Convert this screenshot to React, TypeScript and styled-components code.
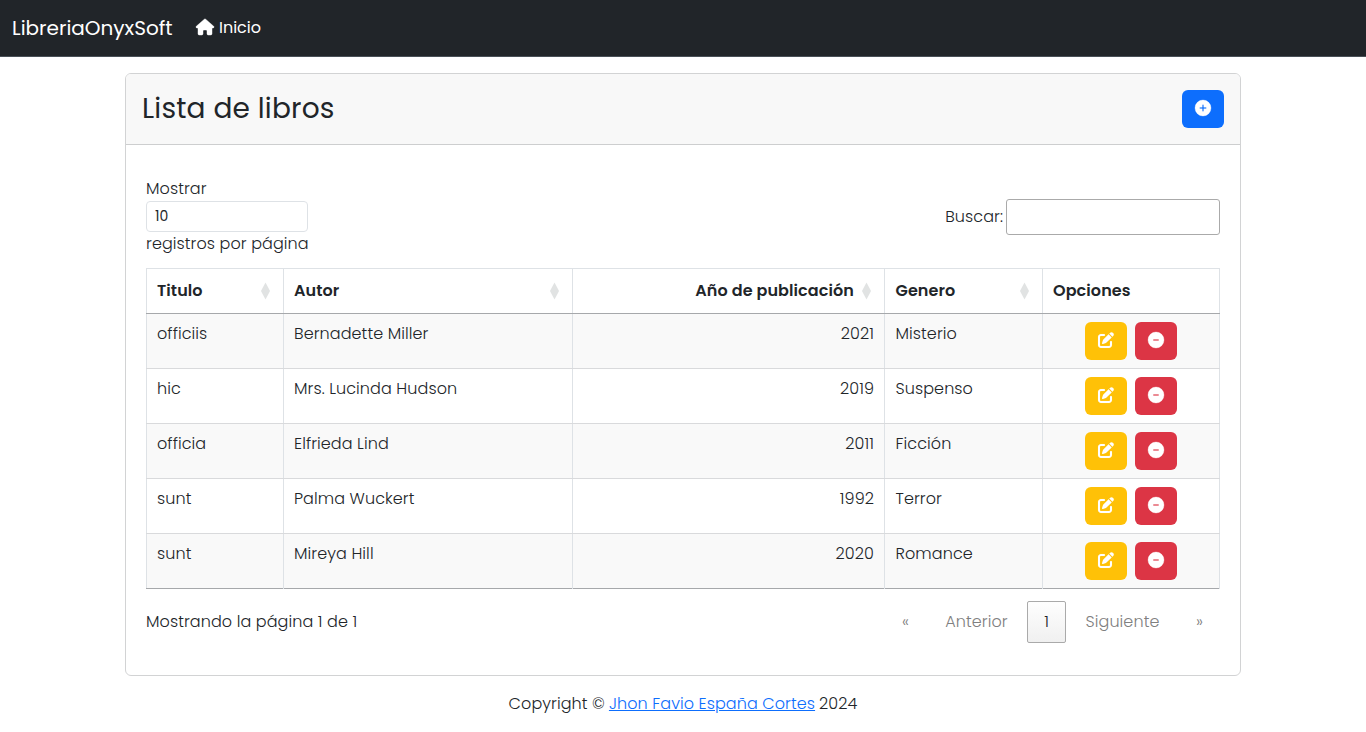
import React from 'react';
import styled, { createGlobalStyle } from 'styled-components';
import { FaHouse, FaCirclePlus, FaCircleMinus, FaPenToSquare } from 'react-icons/fa6';

const GlobalStyle = createGlobalStyle`
  *, *::before, *::after { box-sizing: border-box; }
  body {
    margin: 0;
    background: #fff;
    color: #212529;
    font-family: Poppins, Inter, sans-serif;
    font-feature-settings: 'cv11', 'ss03';
    font-size: 16px;
    font-weight: 300;
    line-height: 24px;
  }
`;

const T = styled.span<{ $ls?: number }>`
  letter-spacing: ${p => p.$ls ?? 0.09}px;
  white-space: nowrap;
`;

const Navbar = styled.nav`
  display: flex;
  align-items: center;
  height: 57px;
  padding: 0 12px 1px;
  background: #212529;
  border-bottom: 1px solid #495057;
  color: #fff;
  font-weight: 400;
`;
const Brand = styled.a`
  width: 184px;
  font-size: 20px;
  line-height: 30px;
`;
const NavLink = styled.a`
  display: flex;
  align-items: center;
  gap: 5px;
  svg {
    width: 18px;
    height: 16px;
    margin-bottom: 2px;
    stroke: currentColor;
    stroke-width: 14px;
    overflow: visible;
  }
`;
const Card = styled.main`
  width: 1116px;
  height: 603px;
  margin: 16px auto 0;
  border: 1px solid #d2d3d4;
  border-radius: 6px;
  overflow: hidden;
`;
const CardHeader = styled.header`
  display: flex;
  justify-content: space-between;
  align-items: flex-start;
  height: 71px;
  padding: 16px;
  background: #f8f8f8;
  border-bottom: 1px solid #cdcecf;
`;
const Title = styled.h1`
  margin: 0;
  font-size: 28px;
  line-height: 38px;
  font-weight: 400;
`;
const IconButton = styled.button<{ $bg: string; $stroke?: number }>`
  display: flex;
  align-items: flex-start;
  justify-content: center;
  width: 42px;
  height: 38px;
  padding: 10px 0 0;
  border: 0;
  border-radius: 6px;
  background: ${p => p.$bg};
  color: #fff;
  font-size: 16px;
  svg {
    stroke: currentColor;
    stroke-width: ${p => p.$stroke ?? 10}px;
    overflow: visible;
  }
`;
const CardBody = styled.section`
  padding: 32px 20px 0;
`;
const Controls = styled.div`
  display: flex;
  justify-content: space-between;
  align-items: flex-start;
  height: 91px;
`;
const LengthLabel = styled.label`
  display: flex;
  flex-direction: column;
  width: 162px;
`;
const LengthBox = styled.span`
  height: 31px;
  padding: 3px 8px;
  border: 1px solid #dee2e6;
  border-radius: 4px;
  font-size: 14px;
  line-height: 23px;
  font-weight: 400;
`;
const SearchLabel = styled.label`
  display: flex;
  align-items: center;
  gap: 3px;
  margin-top: 22px;
`;
const SearchInput = styled.input`
  width: 214px;
  height: 36px;
  border: 1px solid #aaa;
  border-radius: 3px;
  background: transparent;
`;
const Table = styled.table`
  width: 1073px;
  table-layout: fixed;
  border-collapse: collapse;
  border: 1px solid #dee2e6;
  border-bottom-color: #a6a8ab;
`;
const Th = styled.th`
  height: 45px;
  padding: 0 10px;
  border-right: 1px solid #dee2e6;
  border-bottom: 1px solid #a6a8ab;
  text-align: left;
  font-weight: 600;
  &:nth-child(4) { padding-left: 10.5px; }
`;
const ThContent = styled.div<{ $right?: boolean }>`
  display: flex;
  align-items: center;
  justify-content: ${p => (p.$right ? 'flex-end' : 'space-between')};
  gap: 8px;
  padding-right: 3px;
`;
const Tr = styled.tr`
  height: 55px;
  &:nth-child(odd) { background: #f9f9f9; }
  &:not(:last-child) > td { border-bottom: 1px solid #d9dadc; }
`;
const Td = styled.td<{ $right?: boolean }>`
  padding: 8px 10px 0;
  border-right: 1px solid #dee2e6;
  vertical-align: top;
  text-align: ${p => (p.$right ? 'right' : 'left')};
  &:nth-child(4) { padding-left: 10.5px; }
`;
const Actions = styled.div`
  display: flex;
  justify-content: center;
  gap: 8px;
`;
const TableFooter = styled.div`
  display: flex;
  justify-content: space-between;
  padding-top: 12px;
  line-height: 42px;
`;
const Pagination = styled.div`
  display: flex;
  gap: 2px;
`;
const PageButton = styled.a<{ $w: number; $current?: boolean }>`
  width: ${p => p.$w}px;
  height: 42px;
  border: 1px solid ${p => (p.$current ? '#aaa' : 'transparent')};
  border-radius: 2px;
  background: ${p => (p.$current ? 'linear-gradient(#fefefe, #f0f0f0)' : 'none')};
  color: ${p => (p.$current ? '#212529' : '#808080')};
  text-align: center;
  line-height: 40px;
`;
const Footer = styled.footer`
  padding-top: 16px;
  display: flex;
  justify-content: center;
  gap: 4px;
  a { color: #0d6efd; text-decoration: underline; }
`;

const SortMark = () => (
  <svg width="9" height="18" viewBox="0 0 9 18" fill="#e1e3e3">
    <path d="M4.5 0.5 9 9 4.5 17.5 0 9Z" />
  </svg>
);

const columns: { label: string; width: number; right?: boolean; sortable?: boolean }[] = [
  { label: 'Titulo', width: 137, sortable: true },
  { label: 'Autor', width: 289, sortable: true },
  { label: 'Año de publicación', width: 312, right: true, sortable: true },
  { label: 'Genero', width: 158, sortable: true },
  { label: 'Opciones', width: 177 },
];
const books = [
  ['officiis', 'Bernadette Miller', '2021', 'Misterio'],
  ['hic', 'Mrs. Lucinda Hudson', '2019', 'Suspenso'],
  ['officia', 'Elfrieda Lind', '2011', 'Ficción'],
  ['sunt', 'Palma Wuckert', '1992', 'Terror'],
  ['sunt', 'Mireya Hill', '2020', 'Romance'],
];

export default function App() {
  return (
    <>
      <GlobalStyle />
      <Navbar>
        <Brand><T $ls={0}>LibreriaOnyxSoft</T></Brand>
        <NavLink><FaHouse /><T $ls={0}>Inicio</T></NavLink>
      </Navbar>
      <Card>
        <CardHeader>
          <Title><T $ls={0.2}>Lista de libros</T></Title>
          <IconButton $bg="#0d6efd" aria-label="Agregar"><FaCirclePlus /></IconButton>
        </CardHeader>
        <CardBody>
          <Controls>
            <LengthLabel>
              <T>Mostrar</T>
              <LengthBox><T>10</T></LengthBox>
              <T>registros por página</T>
            </LengthLabel>
            <SearchLabel><T>Buscar:</T><SearchInput /></SearchLabel>
          </Controls>
          <Table>
            <colgroup>{columns.map(c => <col key={c.label} style={{ width: c.width }} />)}</colgroup>
            <thead>
              <tr>
                {columns.map(c => (
                  <Th key={c.label}>
                    <ThContent $right={c.right}>
                      <T>{c.label}</T>
                      {c.sortable && <SortMark />}
                    </ThContent>
                  </Th>
                ))}
              </tr>
            </thead>
            <tbody>
              {books.map((book, i) => (
                <Tr key={i}>
                  {book.map((text, j) => (
                    <Td key={j} $right={j === 2}><T>{text}</T></Td>
                  ))}
                  <Td>
                    <Actions>
                      <IconButton $bg="#ffc107" $stroke={3} aria-label="Editar"><FaPenToSquare /></IconButton>
                      <IconButton $bg="#dc3545" aria-label="Eliminar"><FaCircleMinus /></IconButton>
                    </Actions>
                  </Td>
                </Tr>
              ))}
            </tbody>
          </Table>
          <TableFooter>
            <T>Mostrando la página 1 de 1</T>
            <Pagination>
              <PageButton $w={41}>«</PageButton>
              <PageButton $w={97}><T>Anterior</T></PageButton>
              <PageButton $w={39} $current>1</PageButton>
              <PageButton $w={109}><T>Siguiente</T></PageButton>
              <PageButton $w={41}>»</PageButton>
            </Pagination>
          </TableFooter>
        </CardBody>
      </Card>
      <Footer>
        <T>Copyright ©</T>
        <a><T>Jhon Favio España Cortes</T></a>
        <T>2024</T>
      </Footer>
    </>
  );
}
